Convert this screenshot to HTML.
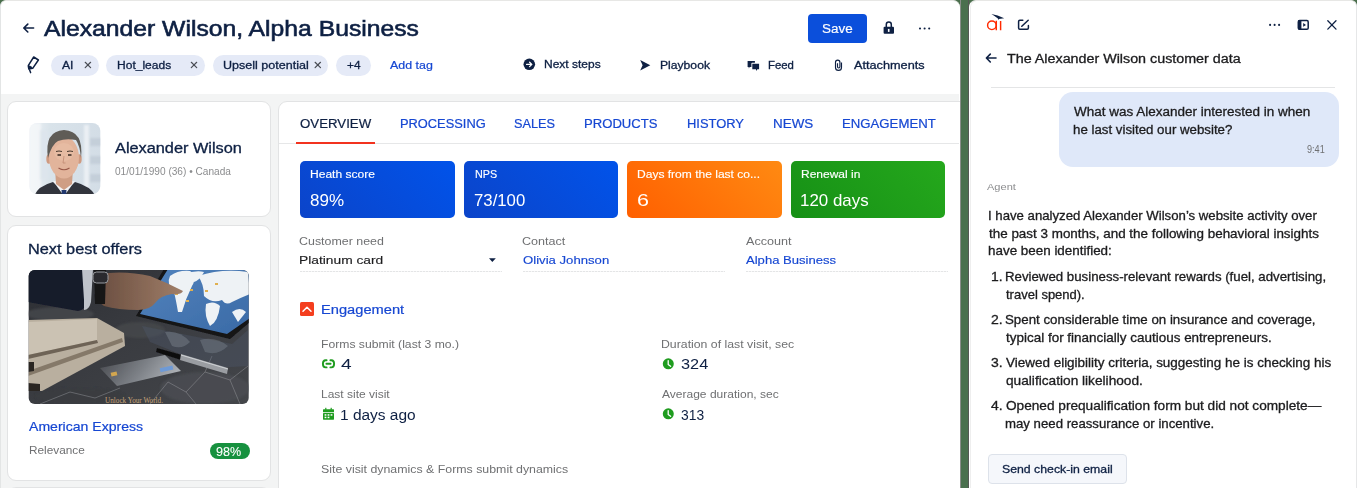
<!DOCTYPE html>
<html><head><meta charset="utf-8"><style>
*{margin:0;padding:0;box-sizing:border-box}
html,body{width:1357px;height:488px;overflow:hidden}
body{position:relative;font-family:"Liberation Sans",sans-serif;background:#4a6e4c}
.t{position:absolute;white-space:nowrap;line-height:1;transform-origin:0 0}
.a{position:absolute}
.lp{left:0;top:0;width:960px;height:520px;background:#fff;border:1px solid #e3e5e5;border-right:none;border-top-color:#e7e7e5;border-radius:6px 7px 0 0}
.gbg{left:1px;top:94px;width:958px;height:420px;background:#f3f4f4}
.card{position:absolute;background:#fff;border:1px solid #e2e3e4;border-radius:9px}
.pill{position:absolute;background:#e5eaf7;border-radius:11px}
.x{position:absolute;width:8px;height:8px}
.kpi{position:absolute;top:160.5px;height:57.3px;width:154.6px;border-radius:5px}
.uline{position:absolute;top:271px;height:1px;background:repeating-linear-gradient(90deg,#e4e5e6 0 2px,#f6f6f7 2px 3px)}
.rp{left:969px;top:0;width:388px;height:520px;background:#fff;border:1px solid #e6e7e8;border-left:1px solid #fff;border-top-color:#e7e7e5;border-radius:7px 6px 0 0;box-shadow:inset 1px 0 0 #eeeeee}

</style></head><body>
<div class="a lp"></div>
<div class="a gbg"></div>
<!-- profile card -->
<div class="card" style="left:7px;top:101px;width:264px;height:116px"></div>
<div class="card" style="left:7px;top:225px;width:264px;height:256px"></div>
<div class="card" style="left:7px;top:487px;width:264px;height:40px"></div>
<!-- main card -->
<div class="card" style="left:278.4px;top:101px;width:720px;height:420px"></div>
<div class="a" style="left:279px;top:143px;width:680px;height:1px;background:#e6e7e8"></div>
<div class="a" style="left:296px;top:142px;width:79px;height:2px;background:#f2331f"></div>
<!-- left panel right edge cover -->
<div class="a" style="left:960px;top:0;width:9px;height:488px;background:#4a704e;border-left:1px solid #8a8d8a;border-right:1px solid #555855"></div>
<!-- header tag pills -->
<div class="pill" style="left:51px;top:54.5px;width:47.5px;height:21px"></div>
<div class="pill" style="left:106px;top:54.5px;width:98.5px;height:21px"></div>
<div class="pill" style="left:212.5px;top:54.5px;width:115.5px;height:21px"></div>
<div class="pill" style="left:336px;top:54.5px;width:35px;height:21px"></div>
<!-- save btn -->
<div class="a" style="left:808px;top:14px;width:59px;height:29px;background:#0b4fdb;border-radius:4px"></div>
<!-- KPI -->
<div class="kpi" style="left:300.2px;background:linear-gradient(45deg,#0b44c9,#0153ea)"></div>
<div class="kpi" style="left:463.8px;background:linear-gradient(45deg,#0b44c9,#0153ea)"></div>
<div class="kpi" style="left:627.4px;background:linear-gradient(45deg,#ff5f00,#ff8a12)"></div>
<div class="kpi" style="left:790.6px;background:linear-gradient(45deg,#169016,#25a81c)"></div>
<!-- field underlines -->
<div class="uline" style="left:300px;width:202px"></div>
<div class="uline" style="left:523px;width:202px"></div>
<div class="uline" style="left:746px;width:202px"></div>
<!-- relevance pill -->
<div class="a" style="left:210px;top:443px;width:39.5px;height:16px;background:#17913f;border-radius:8px"></div>
<!-- right panel -->
<div class="a rp"></div>
<div class="a" style="left:991px;top:87px;width:344px;height:1px;background:#e4e5e6"></div>
<div class="a" style="left:1059px;top:91.8px;width:280px;height:75.2px;background:#dfe8f9;border-radius:14px"></div>
<div class="a" style="left:988px;top:454px;width:139px;height:30px;background:#f5f7fb;border:1px solid #dde2ea;border-radius:4px"></div>
<svg class="a" style="left:0;top:0" width="1357" height="488" viewBox="0 0 1357 488">
<defs>
 <clipPath id="cpo"><rect x="28.7" y="270" width="220" height="134" rx="6"/></clipPath>
 <clipPath id="cpa"><rect x="29.3" y="123" width="71" height="71" rx="8"/></clipPath>
 <filter id="bl1" x="-5%" y="-5%" width="110%" height="110%"><feGaussianBlur stdDeviation="0.6"/></filter>
 <filter id="bl2" x="-5%" y="-5%" width="110%" height="110%"><feGaussianBlur stdDeviation="1.2"/></filter>
 <linearGradient id="marb" x1="0" y1="0" x2="1" y2="1">
  <stop offset="0" stop-color="#2c2e33"/><stop offset="0.5" stop-color="#3a3c41"/><stop offset="1" stop-color="#44464a"/>
 </linearGradient>
 <linearGradient id="skin" x1="0" y1="0" x2="1" y2="0">
  <stop offset="0" stop-color="#6a4e40"/><stop offset="1" stop-color="#a07e68"/>
 </linearGradient>
 <linearGradient id="cardg" x1="0" y1="0" x2="1" y2="0.3">
  <stop offset="0" stop-color="#45474c"/><stop offset="0.6" stop-color="#7d8187"/><stop offset="1" stop-color="#a9adb2"/>
 </linearGradient>
 <linearGradient id="scr" x1="0" y1="0" x2="1" y2="1">
  <stop offset="0" stop-color="#5283bd"/><stop offset="1" stop-color="#3a6aa6"/>
 </linearGradient>
 <linearGradient id="abg" x1="0" y1="0" x2="1" y2="0">
  <stop offset="0" stop-color="#eef2f5"/><stop offset="0.3" stop-color="#d9e3ea"/><stop offset="1" stop-color="#d3dde6"/>
 </linearGradient>
</defs>
<g clip-path="url(#cpo)">
 <rect x="28" y="269" width="222" height="136" fill="url(#marb)"/>
 <g filter="url(#bl2)" opacity="0.8">
  <ellipse cx="60" cy="314" rx="34" ry="7" fill="#46484d"/>
  <ellipse cx="80" cy="396" rx="45" ry="8" fill="#3a3c41"/>
  <ellipse cx="205" cy="388" rx="45" ry="16" fill="#4c4e52"/>
  <ellipse cx="140" cy="330" rx="25" ry="8" fill="#46484c"/>
 </g>
 <g opacity="0.6" fill="none" stroke="#a2a4a8" stroke-width="0.7">
  <path d="M150 404L168 382L186 392L205 372L230 380L248 366"/>
  <path d="M186 392L196 404M205 372L212 356M230 380L240 404"/>
  <path d="M40 404L70 392L95 398L120 388"/>
 </g>
 <g filter="url(#bl1)">
 <!-- reflection -->
 <path d="M142 326L232 344L248 330L248 366L215 368L150 342Z" fill="#4e5a6c" opacity="0.35"/>
 <path d="M165 332Q180 330 190 342Q182 350 172 346Z" fill="#9aa4b0" opacity="0.3"/>
 <path d="M200 340Q215 336 228 346Q218 356 205 352Z" fill="#9aa4b0" opacity="0.28"/>
 <!-- tablet frame -->
 <path d="M164 269H250V322L230 339L136 316Z" fill="#131416"/>
 <path d="M168 269H250V318L227 334L140 314Z" fill="url(#scr)"/>
 <!-- continents -->
 <path d="M170 276Q178 270 190 271Q198 276 192 286Q186 298 182 312L178 312Q176 300 174 292Q166 284 170 276Z" fill="#eef2f5"/>
 <path d="M184 274Q196 270 204 272Q200 280 194 282Z" fill="#eef2f5"/>
 <path d="M198 276Q222 268 248 272L250 294Q240 298 232 302Q226 306 222 300Q212 304 204 296Q204 284 198 276Z" fill="#eef2f5"/>
 <path d="M206 304Q214 300 220 306Q218 322 210 326Q204 316 206 304Z" fill="#eef2f5"/>
 <path d="M232 312Q240 306 246 312L238 322Z" fill="#eef2f5"/>
 <g fill="#e0b050"><rect x="175" y="293" width="3" height="2"/><rect x="190" y="289" width="3" height="2"/><rect x="205" y="290" width="3" height="2"/><rect x="215" y="283" width="3" height="2"/><rect x="186" y="300" width="3" height="2"/></g>
 <!-- sleeve -->
 <path d="M28 269H90L88 298Q86 310 78 311L28 302Z" fill="#141a2a"/>
 <path d="M82 269H93L91 302Q89 310 84 310L84 300Z" fill="#bfc3ca"/>
 <!-- hand -->
 <path d="M98 274Q125 270 150 276Q168 283 183 291Q181 295 172 294Q160 296 156 302Q150 310 138 310Q118 310 104 306Q98 302 98 296Z" fill="url(#skin)"/>
 <!-- watch -->
 <path d="M94 269H106L105 304H95Z" fill="#141416"/>
 <rect x="93" y="272" width="15" height="11" rx="3.5" fill="#2a2b2e" stroke="#9a9ca0" stroke-width="1"/>
 <!-- notebooks -->
 <path d="M28 320L97 318L124 333L125 346L42 391L28 391Z" fill="#b9af9f"/>
 <path d="M28 322L97 319L97 340L28 355Z" fill="#cbc2b3"/>
 <path d="M28 355L97 340L98 343L28 359Z" fill="#6e6356"/>
 <path d="M28 371L122 338L123 342L28 376Z" fill="#857969"/>
 <path d="M28 383L40 384L40 391L28 391Z" fill="#2a2623"/>
 <path d="M28 362L34 362L34 371L28 372Z" fill="#2a2623"/>
 <!-- card -->
 <path d="M100 368L165 355L181 371L117 386Z" fill="url(#cardg)"/>
 <rect x="111" y="372" width="6" height="4" fill="#d2a650" transform="rotate(-12 114 374)"/>
 <rect x="160" y="367" width="13" height="4" fill="#6e9ad6" transform="rotate(-12 166 369)"/>
 <!-- pen -->
 <path d="M157 348L182 355L181 360L156 352Z" fill="#0e0e10"/>
 <path d="M181 354L228 368L227 374L180 360Z" fill="#9a9da2"/>
 <path d="M181 355L228 369" stroke="#dcdee1" stroke-width="0.8"/>
 </g>
 <text x="134" y="402.5" font-family="Liberation Serif" font-size="7.2" fill="#c8a57a" text-anchor="middle">Unlock Your World.</text>
</g>
<g clip-path="url(#cpa)">
 <rect x="29" y="123" width="72" height="72" fill="url(#abg)"/>
 <g filter="url(#bl2)" opacity="0.75">
  <rect x="29" y="123" width="12" height="72" fill="#f6f8fa"/>
  <rect x="84" y="125" width="5" height="70" fill="#f2f5f8"/>
  <rect x="90" y="138" width="12" height="8" fill="#bfcad5"/>
  <rect x="90" y="156" width="12" height="8" fill="#bfcad5"/>
  <rect x="90" y="174" width="12" height="8" fill="#bfcad5"/>
  <rect x="40" y="130" width="8" height="50" fill="#dde5ec"/>
 </g>
 <g filter="url(#bl1)">
 <path d="M34 196Q38 186 53 182L64 192L75 182Q90 186 96 196Z" fill="#30343e"/>
 <path d="M53 181L75 181L64 196Z" fill="#f1f2f4"/>
 <path d="M61.5 190H66.5L66 196H62Z" fill="#22396e"/>
 <path d="M55 168H73L72 184L64 190L56 184Z" fill="#cf9e84"/>
 <ellipse cx="48.8" cy="159" rx="2.5" ry="4.8" fill="#cf9a80"/>
 <ellipse cx="79.2" cy="159" rx="2.5" ry="4.8" fill="#cf9a80"/>
 <ellipse cx="64" cy="157.5" rx="15" ry="21" fill="#e2b49b"/>
 <ellipse cx="64" cy="152" rx="10" ry="9" fill="#e9bfa7" opacity="0.6"/>
 <path d="M48 158Q44 131 64 130Q84 131 81 158Q80 146 76 140Q66 138 58 141Q52 144 48 158Z" fill="#5f5b57"/>
 <path d="M56 151.5Q59 150.5 62 151.5M67 151.5Q70 150.5 73 151.5" stroke="#4a3a30" stroke-width="1" fill="none"/>
 <path d="M57.5 155H61M68 155H71.5" stroke="#3a2a22" stroke-width="1.3"/>
 <path d="M64 156L63 163L65.5 163" stroke="#c08a72" stroke-width="0.8" fill="none"/>
 <path d="M58.5 168Q64 171.5 69.5 168" stroke="#9a5a4a" stroke-width="1.1" fill="none"/>
 </g>
</g>
</svg>

<svg class="a" style="left:0;top:0" width="1357" height="488" viewBox="0 0 1357 488">
<g fill="none" stroke="#0e2043" stroke-width="1.6" stroke-linecap="round" stroke-linejoin="round">
 <!-- back arrow -->
 <path d="M33.6 28H24.2M27.8 24.1L23.8 28L27.8 32"/>
 <!-- pencil -->
 <path d="M33.7 57L38.4 60L32.7 68.3L28.8 68.9L28.4 65.3Z M29 68.5L30.6 72.6" stroke-width="1.5"/>
 <path d="M28.6 65.8L31.2 66.6L32.2 68.2L28.9 68.7Z" fill="#0e2043" stroke-width="0.8"/>
 <!-- right back arrow -->
 <path d="M996 58H986.5M990.3 54.1L986.4 58L990.3 62"/>
 <!-- edit icon -->
 <path d="M1022.8 20.3H1019.8Q1018.6 20.3 1018.6 21.5V28.1Q1018.6 29.3 1019.8 29.3H1027.2Q1028.4 29.3 1028.4 28.1V25.6 M1021.8 26.2L1028.2 20.2" stroke-width="1.5"/>
 <!-- close x -->
 <path d="M1327.8 20.8L1336 29.1M1336 20.8L1327.8 29.1" stroke-width="1.3"/>
 <!-- panel icon -->
 <rect x="1298.3" y="20.6" width="9.9" height="8.6" rx="1.3" stroke-width="1.5"/>
</g>
<g fill="#0e2043">
 <rect x="1298" y="20.3" width="3.4" height="9.2" rx="0.8"/>
 <path d="M1303.2 23L1306 24.9L1303.2 26.8Z"/>
 <circle cx="1270.1" cy="24.9" r="1.05"/><circle cx="1274.6" cy="24.9" r="1.05"/><circle cx="1279.1" cy="24.9" r="1.05"/>
 <circle cx="920" cy="28.5" r="1.05"/><circle cx="924.6" cy="28.5" r="1.05"/><circle cx="929.2" cy="28.5" r="1.05"/>
 <!-- next steps -->
 <circle cx="529.3" cy="64.3" r="5.8"/>
 <!-- playbook -->
 <path d="M640.2 60L650.3 65.3L640.2 70.6L642.6 65.3Z"/>
 <!-- feed -->
 <path d="M747.6 61H754.9V62.8H752.2Q751.4 62.8 751.4 63.6V66.9H749.6L748.9 68.4L748.6 66.9H747.6Z"/>
 <path d="M752.3 63.8H759.1V69.2H757.3L756.5 70.9L755.9 69.2H752.3Z"/>
 <!-- lock -->
 <rect x="883.6" y="26.8" width="10.4" height="7" rx="1"/>
 <!-- caret -->
 <path d="M489 258.2H495.8L492.3 261.9Z"/>
 <!-- chevron square -->
 <rect x="300" y="302.1" width="14" height="14" rx="1.6" fill="#f43e1e"/>
</g>
<g fill="none" stroke="#fff" stroke-width="1.3" stroke-linecap="round" stroke-linejoin="round">
 <path d="M526.6 64.4H531.8M529.6 62.2L531.8 64.4L529.6 66.6"/>
 <path d="M303 311.2L307 307.3L311 311.2" stroke-width="1.5"/>
</g>
<g fill="none" stroke="#0e2043" stroke-width="1.5">
 <path d="M886.3 27V24.6Q886.3 22.1 888.8 22.1Q891.3 22.1 891.3 24.6V27"/>
 <!-- paperclip -->
 <path d="M841.5 62.6V67.4A3 3 0 0 1 835.5 67.4V62.3A2.2 2.2 0 0 1 839.9 62.3V66.8A1.2 1.2 0 0 1 837.5 66.8V63.2" stroke-width="1.15"/>
</g>
<rect x="887.9" y="28.9" width="1.6" height="3" fill="#fff"/>
<!-- tag x -->
<g stroke="#4a4d55" stroke-width="1.2" stroke-linecap="round">
 <path d="M85.2 62.3L90.6 67.6M90.6 62.3L85.2 67.6"/>
 <path d="M191.3 62.3L196.7 67.6M196.7 62.3L191.3 67.6"/>
 <path d="M315.1 62.3L320.5 67.6M320.5 62.3L315.1 67.6"/>
</g>
<!-- green icons -->
<g fill="none" stroke="#1f9c1f" stroke-width="1.9" stroke-linecap="round">
 <path d="M326.6 360.2H325.6Q322.9 360.2 322.9 363.8Q322.9 367.4 325.6 367.4H326.6 M330.4 360.2H331.4Q334.1 360.2 334.1 363.8Q334.1 367.4 331.4 367.4H330.4 M326.4 363.8H330.6"/>
</g>
<g fill="#1f9c1f">
 <rect x="323" y="409.2" width="11" height="3" rx="0.5"/>
 <rect x="325.2" y="407.8" width="1.2" height="2"/><rect x="330.6" y="407.8" width="1.2" height="2"/>
 <rect x="323" y="413" width="11" height="6.7" rx="0.6"/>
 <circle cx="668.3" cy="363.8" r="5.5"/>
 <circle cx="668.3" cy="413.8" r="5.5"/>
</g>
<g fill="#fff">
 <rect x="324.6" y="414.2" width="1.8" height="1.5"/><rect x="327.6" y="414.2" width="1.8" height="1.5"/><rect x="330.6" y="414.2" width="1.8" height="1.5"/>
 <rect x="324.6" y="416.7" width="1.8" height="1.5"/><rect x="327.6" y="416.7" width="1.8" height="1.5"/>
</g>
<g fill="none" stroke="#fff" stroke-width="1.3" stroke-linecap="round" stroke-linejoin="round">
 <path d="M668.2 360.6V364.4L670.6 366.3"/>
 <path d="M668.2 410.6V414.4L670.6 416.3"/>
</g>
<!-- ai logo -->
<g fill="none" stroke="#ff2a00" stroke-width="1.45">
 <circle cx="991.9" cy="25.3" r="4.3"/>
 <path d="M996.3 20.8V30.2 M1000.6 20.9V30.2"/>
</g>
<path d="M991.4 14.1Q997.5 15.2 1004.2 18.3L998.9 18.9L998.2 20L997.9 18.5Q994.8 16.2 991.4 14.1Z" fill="#0e2043"/>
</svg>

<div class="t" id="title" style="left:43.84px;top:17.99px;font-size:22.09px;color:#0e2043;-webkit-text-stroke:0.6px #0e2043;transform:scaleX(1.1191)">Alexander Wilson, Alpha Business</div>
<div class="t" id="tag1" style="left:61.63px;top:60.11px;font-size:11.05px;color:#0e2043;-webkit-text-stroke:0.3px #0e2043;transform:scaleX(1.1000)">AI</div>
<div class="t" id="tag2" style="left:117.16px;top:60.11px;font-size:11.05px;color:#0e2043;-webkit-text-stroke:0.3px #0e2043;transform:scaleX(1.0898)">Hot_leads</div>
<div class="t" id="tag3" style="left:223.14px;top:60.11px;font-size:11.05px;color:#0e2043;-webkit-text-stroke:0.3px #0e2043;transform:scaleX(1.1347)">Upsell potential</div>
<div class="t" id="tag4" style="left:346.74px;top:60.11px;font-size:11.05px;color:#0e2043;-webkit-text-stroke:0.3px #0e2043;transform:scaleX(1.0750)">+4</div>
<div class="t" id="addtag" style="left:389.57px;top:60.11px;font-size:11.05px;color:#1647d2;-webkit-text-stroke:0.2px #1647d2;transform:scaleX(1.1237)">Add tag</div>
<div class="t" id="nx" style="left:543.93px;top:59.08px;font-size:10.61px;color:#0e2043;-webkit-text-stroke:0.3px #0e2043;transform:scaleX(1.1300)">Next steps</div>
<div class="t" id="pb" style="left:659.57px;top:59.55px;font-size:10.76px;color:#0e2043;-webkit-text-stroke:0.3px #0e2043;transform:scaleX(1.1295)">Playbook</div>
<div class="t" id="fd" style="left:768.17px;top:59.55px;font-size:10.76px;color:#0e2043;-webkit-text-stroke:0.3px #0e2043;transform:scaleX(1.0583)">Feed</div>
<div class="t" id="at" style="left:853.65px;top:59.55px;font-size:10.76px;color:#0e2043;-webkit-text-stroke:0.3px #0e2043;transform:scaleX(1.1817)">Attachments</div>
<div class="t" id="save" style="left:821.70px;top:23.48px;font-size:12.50px;color:#ffffff;-webkit-text-stroke:0.15px #ffffff;transform:scaleX(1.0778)">Save</div>
<div class="t" id="pname" style="left:114.77px;top:142.37px;font-size:13.81px;color:#0e2043;-webkit-text-stroke:0.3px #0e2043;transform:scaleX(1.1822)">Alexander Wilson</div>
<div class="t" id="dob" style="left:114.79px;top:166.75px;font-size:10.00px;color:#8b8c8e;transform:scaleX(1.0104)">01/01/1990 (36) • Canada</div>
<div class="t" id="nbo" style="left:28.49px;top:241.72px;font-size:14.10px;color:#0e2043;-webkit-text-stroke:0.3px #0e2043;transform:scaleX(1.1582)">Next best offers</div>
<div class="t" id="amex" style="left:28.78px;top:421.00px;font-size:12.35px;color:#1647d2;-webkit-text-stroke:0.2px #1647d2;transform:scaleX(1.1390)">American Express</div>
<div class="t" id="rel" style="left:28.51px;top:445.62px;font-size:10.47px;color:#6f7072;transform:scaleX(1.1286)">Relevance</div>
<div class="t" id="pct" style="left:216.36px;top:445.52px;font-size:12.21px;color:#ffffff;-webkit-text-stroke:0.1px #ffffff;transform:scaleX(1.0304)">98%</div>
<div class="t" id="tab1" style="left:299.58px;top:117.62px;font-size:12.21px;color:#0e2043;-webkit-text-stroke:0.2px #0e2043;transform:scaleX(1.0862)">OVERVIEW</div>
<div class="t" id="tab2" style="left:399.76px;top:117.62px;font-size:12.21px;color:#1647d2;-webkit-text-stroke:0.2px #1647d2;transform:scaleX(1.0525)">PROCESSING</div>
<div class="t" id="tab3" style="left:514.37px;top:117.62px;font-size:12.21px;color:#1647d2;-webkit-text-stroke:0.2px #1647d2;transform:scaleX(1.0410)">SALES</div>
<div class="t" id="tab4" style="left:584.13px;top:117.62px;font-size:12.21px;color:#1647d2;-webkit-text-stroke:0.2px #1647d2;transform:scaleX(1.0731)">PRODUCTS</div>
<div class="t" id="tab5" style="left:686.97px;top:117.62px;font-size:12.21px;color:#1647d2;-webkit-text-stroke:0.2px #1647d2;transform:scaleX(1.0585)">HISTORY</div>
<div class="t" id="tab6" style="left:773.15px;top:117.62px;font-size:12.21px;color:#1647d2;-webkit-text-stroke:0.2px #1647d2;transform:scaleX(1.1000)">NEWS</div>
<div class="t" id="tab7" style="left:841.70px;top:117.62px;font-size:12.21px;color:#1647d2;-webkit-text-stroke:0.2px #1647d2;transform:scaleX(1.0802)">ENGAGEMENT</div>
<div class="t" id="k1l" style="left:310.36px;top:168.01px;font-size:11.63px;color:#ffffff;-webkit-text-stroke:0.15px #ffffff;transform:scaleX(1.0371)">Heath score</div>
<div class="t" id="k1v" style="left:310.34px;top:192.72px;font-size:15.99px;color:#ffffff;transform:scaleX(1.0645)">89%</div>
<div class="t" id="k2l" style="left:474.84px;top:168.01px;font-size:11.63px;color:#ffffff;-webkit-text-stroke:0.15px #ffffff;transform:scaleX(0.9261)">NPS</div>
<div class="t" id="k2v" style="left:474.35px;top:192.72px;font-size:15.99px;color:#ffffff;transform:scaleX(1.0479)">73/100</div>
<div class="t" id="k3l" style="left:636.96px;top:168.01px;font-size:11.63px;color:#ffffff;-webkit-text-stroke:0.15px #ffffff;transform:scaleX(1.0350)">Days from the last co...</div>
<div class="t" id="k3v" style="left:636.66px;top:192.72px;font-size:15.99px;color:#ffffff;transform:scaleX(1.3429)">6</div>
<div class="t" id="k4l" style="left:800.77px;top:168.01px;font-size:11.63px;color:#ffffff;-webkit-text-stroke:0.15px #ffffff;transform:scaleX(1.0316)">Renewal in</div>
<div class="t" id="k4v" style="left:799.70px;top:192.72px;font-size:15.99px;color:#ffffff;transform:scaleX(1.0571)">120 days</div>
<div class="t" id="f1l" style="left:298.88px;top:236.12px;font-size:11.05px;color:#6f7072;transform:scaleX(1.1243)">Customer need</div>
<div class="t" id="f1v" style="left:298.83px;top:253.69px;font-size:11.77px;color:#1c1c1e;-webkit-text-stroke:0.15px #1c1c1e;transform:scaleX(1.1718)">Platinum card</div>
<div class="t" id="f2l" style="left:521.86px;top:236.12px;font-size:11.05px;color:#6f7072;transform:scaleX(1.1378)">Contact</div>
<div class="t" id="f2v" style="left:523.00px;top:253.69px;font-size:11.77px;color:#1647d2;-webkit-text-stroke:0.15px #1647d2;transform:scaleX(1.1169)">Olivia Johnson</div>
<div class="t" id="f3l" style="left:746.00px;top:236.12px;font-size:11.05px;color:#6f7072;transform:scaleX(1.1400)">Account</div>
<div class="t" id="f3v" style="left:746.00px;top:253.69px;font-size:11.77px;color:#1647d2;-webkit-text-stroke:0.15px #1647d2;transform:scaleX(1.1111)">Alpha Business</div>
<div class="t" id="eng" style="left:321.15px;top:303.46px;font-size:13.23px;color:#1647d2;-webkit-text-stroke:0.2px #1647d2;transform:scaleX(1.1093)">Engagement</div>
<div class="t" id="s1l" style="left:321.16px;top:338.89px;font-size:11.19px;color:#6f7072;transform:scaleX(1.0881)">Forms submit (last 3 mo.)</div>
<div class="t" id="s1v" style="left:341.07px;top:357.15px;font-size:14.54px;color:#0e2043;transform:scaleX(1.3143)">4</div>
<div class="t" id="s2l" style="left:321.15px;top:389.23px;font-size:10.90px;color:#6f7072;transform:scaleX(1.1016)">Last site visit</div>
<div class="t" id="s2v" style="left:340.12px;top:408.03px;font-size:14.68px;color:#0e2043;transform:scaleX(1.0543)">1 days ago</div>
<div class="t" id="s3l" style="left:660.53px;top:338.88px;font-size:11.19px;color:#6f7072;transform:scaleX(1.0983)">Duration of last visit, sec</div>
<div class="t" id="s3v" style="left:680.51px;top:357.15px;font-size:14.54px;color:#0e2043;transform:scaleX(1.1217)">324</div>
<div class="t" id="s4l" style="left:661.63px;top:389.24px;font-size:10.90px;color:#6f7072;transform:scaleX(1.1038)">Average duration, sec</div>
<div class="t" id="s4v" style="left:680.64px;top:408.03px;font-size:14.68px;color:#0e2043;transform:scaleX(0.9435)">313</div>
<div class="t" id="dyn" style="left:320.51px;top:463.91px;font-size:11.05px;color:#6f7072;transform:scaleX(1.1186)">Site visit dynamics &amp; Forms submit dynamics</div>
<div class="t" id="ph" style="left:1007.21px;top:53.42px;font-size:12.21px;color:#1c1c1e;-webkit-text-stroke:0.3px #1c1c1e;transform:scaleX(1.1715)">The Alexander Wilson customer data</div>
<div class="t" id="b1" style="left:1074.05px;top:105.66px;font-size:12.28px;color:#1c1c1e;-webkit-text-stroke:0.3px #1c1c1e;transform:scaleX(1.1000)">What was Alexander interested in when</div>
<div class="t" id="b2" style="left:1072.96px;top:123.76px;font-size:12.28px;color:#1c1c1e;-webkit-text-stroke:0.3px #1c1c1e;transform:scaleX(1.0823)">he last visited our website?</div>
<div class="t" id="btime" style="left:1306.80px;top:144.97px;font-size:10.03px;color:#6f7072;transform:scaleX(0.9105)">9:41</div>
<div class="t" id="agent" style="left:987.22px;top:182.87px;font-size:8.58px;color:#8b8c8e;transform:scaleX(1.2870)">Agent</div>
<div class="t" id="p1" style="left:987.75px;top:210.40px;font-size:12.35px;color:#1c1c1e;-webkit-text-stroke:0.3px #1c1c1e;transform:scaleX(1.0681)">I have analyzed Alexander Wilson’s website activity over</div>
<div class="t" id="p2" style="left:988.82px;top:227.90px;font-size:12.35px;color:#1c1c1e;-webkit-text-stroke:0.3px #1c1c1e;transform:scaleX(1.0878)">the past 3 months, and the following behavioral insights</div>
<div class="t" id="p3" style="left:987.74px;top:245.40px;font-size:12.35px;color:#1c1c1e;-webkit-text-stroke:0.3px #1c1c1e;transform:scaleX(1.0867)">have been identified:</div>
<div class="t" id="n1" style="left:990.88px;top:271.33px;font-size:12.35px;color:#1c1c1e;-webkit-text-stroke:0.3px #1c1c1e;transform:scaleX(1.1250)">1.</div>
<div class="t" id="i1a" style="left:1005.13px;top:271.35px;font-size:12.35px;color:#1c1c1e;-webkit-text-stroke:0.3px #1c1c1e;transform:scaleX(1.0734)">Reviewed business-relevant rewards (fuel, advertising,</div>
<div class="t" id="i1b" style="left:1006.20px;top:289.01px;font-size:12.35px;color:#1c1c1e;-webkit-text-stroke:0.3px #1c1c1e;transform:scaleX(1.0527)">travel spend).</div>
<div class="t" id="n2" style="left:990.57px;top:314.35px;font-size:12.35px;color:#1c1c1e;-webkit-text-stroke:0.3px #1c1c1e;transform:scaleX(1.1333)">2.</div>
<div class="t" id="i2a" style="left:1005.12px;top:314.35px;font-size:12.35px;color:#1c1c1e;-webkit-text-stroke:0.3px #1c1c1e;transform:scaleX(1.0776)">Spent considerable time on insurance and coverage,</div>
<div class="t" id="i2b" style="left:1006.20px;top:332.01px;font-size:12.35px;color:#1c1c1e;-webkit-text-stroke:0.3px #1c1c1e;transform:scaleX(1.0909)">typical for financially cautious entrepreneurs.</div>
<div class="t" id="n3" style="left:990.57px;top:357.15px;font-size:12.35px;color:#1c1c1e;-webkit-text-stroke:0.3px #1c1c1e;transform:scaleX(1.1333)">3.</div>
<div class="t" id="i3a" style="left:1006.20px;top:357.15px;font-size:12.35px;color:#1c1c1e;-webkit-text-stroke:0.3px #1c1c1e;transform:scaleX(1.0906)">Viewed eligibility criteria, suggesting he is checking his</div>
<div class="t" id="i3b" style="left:1006.20px;top:374.81px;font-size:12.35px;color:#1c1c1e;-webkit-text-stroke:0.3px #1c1c1e;transform:scaleX(1.1081)">qualification likelihood.</div>
<div class="t" id="n4" style="left:990.57px;top:400.15px;font-size:12.35px;color:#1c1c1e;-webkit-text-stroke:0.3px #1c1c1e;transform:scaleX(1.1333)">4.</div>
<div class="t" id="i4a" style="left:1006.20px;top:400.15px;font-size:12.35px;color:#1c1c1e;-webkit-text-stroke:0.3px #1c1c1e;transform:scaleX(1.1045)">Opened prequalification form but did not complete—</div>
<div class="t" id="i4b" style="left:1005.13px;top:417.81px;font-size:12.35px;color:#1c1c1e;-webkit-text-stroke:0.3px #1c1c1e;transform:scaleX(1.0696)">may need reassurance or incentive.</div>
<div class="t" id="send" style="left:1001.79px;top:463.49px;font-size:11.77px;color:#0e2043;-webkit-text-stroke:0.3px #0e2043;transform:scaleX(1.0443)">Send check-in email</div>

</body></html>
